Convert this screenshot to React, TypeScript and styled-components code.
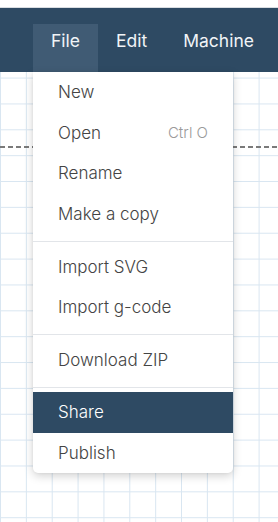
import * as React from "react";
import styled, { createGlobalStyle } from "styled-components";

const GlobalStyle = createGlobalStyle`
  html, body {
    margin: 0;
    padding: 0;
  }
  body {
    font-family: Inter, "Liberation Sans", sans-serif;
  }
`;

const NAVY = "#2e4a63";
const GRID = 25.86;

const Page = styled.div`
  display: flex;
  flex-direction: column;
  min-height: 100vh;
  background-color: #fff;
  background-image: linear-gradient(90deg, #d9e6f1 1px, transparent 1px),
    linear-gradient(180deg, #d9e6f1 1px, transparent 1px);
  background-size: ${GRID}px ${GRID}px;
`;

const TopStrip = styled.div`
  height: 7px;
  background: #fff;
  border-bottom: 1px solid #d9dde2;
`;

const NavBar = styled.nav`
  position: relative;
  z-index: 2;
  display: flex;
  align-items: flex-end;
  height: 64px;
  padding-left: 33px;
  background: ${NAVY};
`;

const NavItem = styled.div<{ $active?: boolean }>`
  position: relative;
  box-sizing: border-box;
  height: 48px;
  padding: 5px 18px 0;
  font-size: 17.5px;
  line-height: 24px;
  color: #f1f4f7;
  background: ${(p) => (p.$active ? "#405b74" : "transparent")};
  cursor: pointer;
`;

const Canvas = styled.div`
  position: relative;
  flex: 1;
`;

const Guide = styled.div`
  position: absolute;
  left: 0;
  right: 0;
  top: 74px;
  height: 2px;
  background: repeating-linear-gradient(
    90deg,
    #7a7a7a 0 5px,
    transparent 5px 8px
  );
`;

const Menu = styled.div`
  position: absolute;
  top: 100%;
  left: 0;
  z-index: 3;
  width: 200px;
  background: #fff;
  border-radius: 0 0 5px 5px;
  box-shadow: 0 3px 10px rgba(0, 0, 0, 0.18), 0 0 3px rgba(0, 0, 0, 0.06);
  overflow: hidden;
`;

const Item = styled.div<{ $selected?: boolean }>`
  box-sizing: border-box;
  display: flex;
  align-items: center;
  justify-content: space-between;
  height: 40.6px;
  padding: 0 25px;
  font-size: 17px;
  font-weight: 300;
  line-height: 20px;
  color: ${(p) => (p.$selected ? "#fff" : "#444")};
  background: ${(p) => (p.$selected ? NAVY : "transparent")};
`;

const Shortcut = styled.span`
  font-size: 15px;
  color: #9a9a9a;
`;

const Divider = styled.div`
  height: 1px;
  margin: 6.5px 0 4.5px;
  background: #e2e5e9;
`;

type Entry = { label: string; shortcut?: string; selected?: boolean } | "divider";

const entries: Entry[] = [
  { label: "New" },
  { label: "Open", shortcut: "Ctrl O" },
  { label: "Rename" },
  { label: "Make a copy" },
  "divider",
  { label: "Import SVG" },
  { label: "Import g-code" },
  "divider",
  { label: "Download ZIP" },
  "divider",
  { label: "Share", selected: true },
  { label: "Publish" },
];

const FileMenu = () => (
  <Menu>
    {entries.map((e, i) =>
      e === "divider" ? (
        <Divider key={i} />
      ) : (
        <Item key={i} $selected={e.selected}>
          <span>{e.label}</span>
          {e.shortcut && <Shortcut>{e.shortcut}</Shortcut>}
        </Item>
      )
    )}
  </Menu>
);

const App = () => (
  <>
    <GlobalStyle />
    <Page>
      <TopStrip />
      <NavBar>
        <NavItem $active>
          File
          <FileMenu />
        </NavItem>
        <NavItem>Edit</NavItem>
        <NavItem>Machine</NavItem>
      </NavBar>
      <Canvas>
        <Guide />
      </Canvas>
    </Page>
  </>
);

export default App;
